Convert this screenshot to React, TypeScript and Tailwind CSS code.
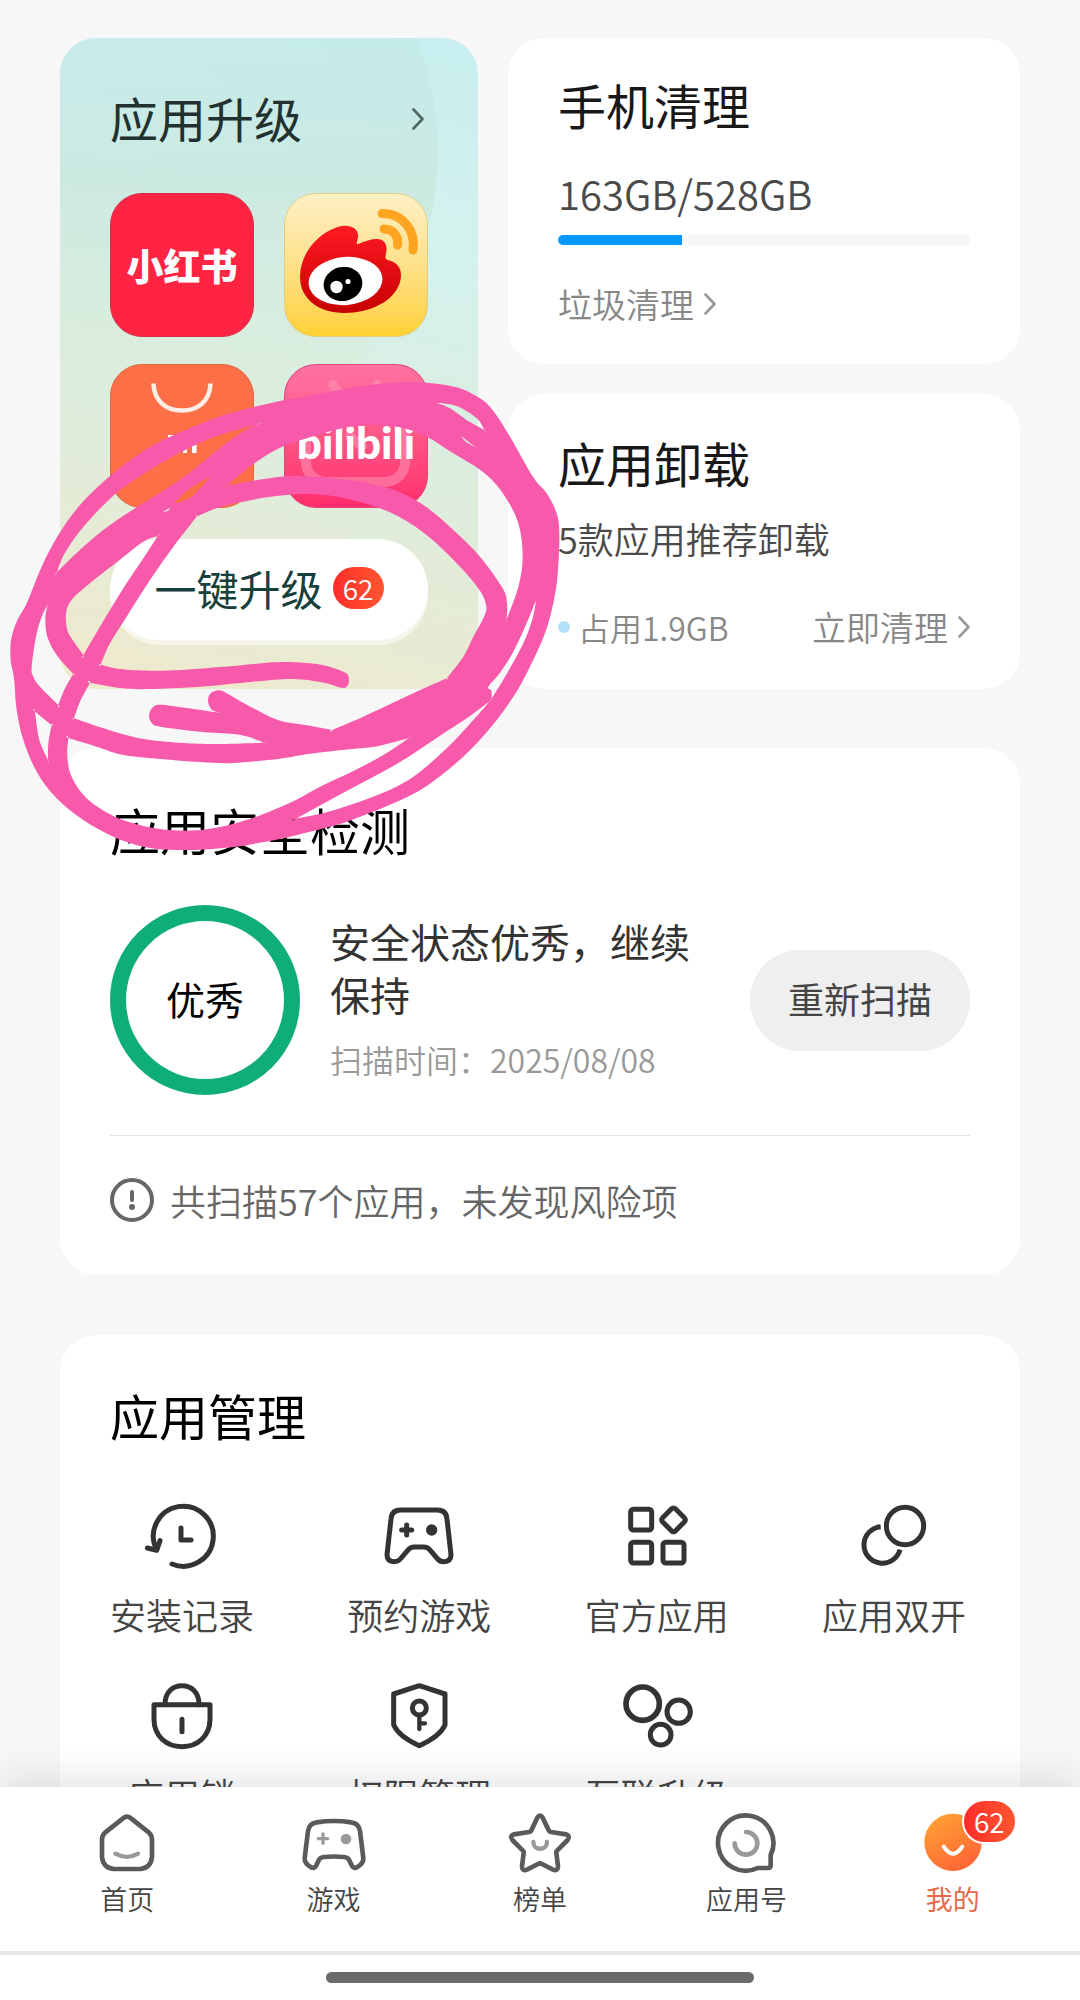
import React from "react";
import type { ReactNode } from "react";

type IconProps = {
  children: ReactNode;
};

// Points are in thirds of a pixel, a repeated point makes a sharp corner
type Point = [number, number];

const smooth = (points: Point[]) => {
  const n = points.length;
  let d = `M${points[0][0]} ${points[0][1]}`;
  for (let i = 0; i < n; i++) {
    const a = points[(i - 1 + n) % n];
    const b = points[i];
    const c = points[(i + 1) % n];
    const e = points[(i + 2) % n];
    d += `C${b[0] + (c[0] - a[0]) / 6} ${b[1] + (c[1] - a[1]) / 6} ${c[0] - (e[0] - b[0]) / 6} ${c[1] - (e[1] - b[1]) / 6} ${c[0]} ${c[1]}`;
  }
  return `${d}Z`;
};

const markerShapes: Point[][] = [
  // outer edge
  [
    [80, 700], [125, 590], [175, 495], [240, 405], [330, 318], [420, 250], [500, 205], [600, 162], [700, 127],
    [840, 93], [930, 77], [1000, 64], [1070, 50], [1180, 38], [1280, 38], [1370, 52], [1440, 85], [1480, 123],
    [1530, 200], [1600, 322], [1640, 370], [1670, 430], [1678, 490], [1674, 600], [1662, 690], [1635, 790],
    [1585, 900], [1540, 980], [1470, 1075], [1390, 1160], [1280, 1248], [1180, 1300], [1040, 1355], [930, 1385],
    [840, 1407], [770, 1420], [700, 1431], [600, 1439], [510, 1439], [430, 1430], [340, 1400], [250, 1350],
    [170, 1285], [110, 1205], [70, 1110], [50, 1020], [42, 925], [32, 870], [33, 810], [50, 755],
  ],
  // inside the small oval, around the arrow and the loose tail
  [
    [590, 440], [590, 440], [650, 415], [720, 397], [800, 382], [870, 374], [940, 372], [1020, 382], [1120, 408],
    [1200, 442], [1290, 503], [1380, 590], [1440, 662], [1459, 710], [1450, 745], [1420, 800], [1390, 860],
    [1340, 925], [1340, 925], [1240, 970], [1090, 1040], [995, 1080], [995, 1080], [920, 1066], [840, 1052],
    [780, 1025], [720, 993], [675, 967], [655, 961], [632, 970], [624, 992], [634, 1018], [655, 1028],
    [655, 1028], [560, 1014], [480, 1004], [456, 1015], [447, 1037], [456, 1060], [480, 1070], [600, 1085],
    [700, 1092], [750, 1102], [792, 1118], [792, 1118], [650, 1122], [550, 1119], [450, 1110], [380, 1096],
    [280, 1065], [222, 1045], [222, 1045], [240, 995], [270, 938], [270, 938], [370, 955], [450, 957],
    [600, 950], [760, 935], [880, 927], [970, 938], [1025, 953], [1041, 949], [1047, 930], [1036, 908],
    [970, 886], [890, 877], [820, 877], [700, 888], [540, 900], [450, 902], [360, 897], [302, 884],
    [302, 884], [330, 820], [380, 740], [450, 630], [520, 530],
  ],
  [
    [473, 499], [473, 499], [430, 515], [350, 577], [270, 640], [215, 690], [198, 730], [202, 780], [218, 810],
    [250, 855], [250, 855], [300, 770], [370, 655], [430, 565],
  ],
  [
    [171, 606], [171, 606], [195, 548], [255, 465], [345, 373], [430, 312], [500, 270], [560, 238], [650, 198],
    [762, 166], [780, 158], [780, 158], [720, 190], [640, 250], [560, 315], [480, 368], [410, 412], [330, 465],
    [250, 530],
  ],
  [[520, 402], [520, 402], [570, 355], [632, 318], [632, 318], [605, 350], [570, 384]],
  [[488, 426], [488, 426], [510, 413], [510, 413], [505, 422]],
  [
    [680, 347], [680, 347], [760, 282], [840, 233], [930, 202], [1040, 172], [1120, 164], [1200, 172],
    [1280, 200], [1360, 250], [1450, 307], [1510, 372], [1555, 460], [1568, 560], [1555, 650], [1520, 748],
    [1520, 748], [1521, 700], [1508, 655], [1440, 560], [1360, 480], [1280, 412], [1200, 367], [1110, 340],
    [990, 323], [890, 318], [840, 320], [760, 332],
  ],
  [[1310, 98], [1310, 98], [1370, 108], [1430, 145], [1453, 180], [1453, 180], [1400, 150], [1350, 115]],
  [[1382, 197], [1382, 197], [1428, 232], [1428, 232], [1400, 217]],
  [
    [1608, 690], [1608, 690], [1580, 760], [1540, 845], [1500, 908], [1465, 950], [1474, 962], [1475, 986],
    [1475, 986], [1520, 912], [1570, 820], [1598, 745],
  ],
  [
    [1470, 992], [1470, 992], [1410, 1038], [1320, 1097], [1190, 1182], [1040, 1263], [888, 1346], [888, 1346],
    [990, 1324], [1140, 1272], [1240, 1220], [1340, 1135], [1420, 1050],
  ],
  [
    [1227, 1104], [1227, 1104], [1160, 1122], [1110, 1132], [1000, 1143], [920, 1153], [840, 1166], [700, 1179],
    [600, 1176], [480, 1167], [370, 1155], [290, 1130], [205, 1104], [205, 1104], [202, 1160], [215, 1220],
    [260, 1285], [340, 1338], [430, 1368], [520, 1381], [620, 1378], [740, 1350], [870, 1298], [960, 1250],
    [1060, 1203], [1150, 1155],
  ],
  [
    [143, 705], [143, 705], [125, 740], [108, 800], [95, 890], [100, 920], [120, 950], [175, 1005], [175, 1005],
    [195, 955], [220, 912], [220, 912], [170, 855], [142, 800], [136, 745],
  ],
  [[105, 1025], [105, 1025], [155, 1065], [155, 1065], [145, 1120], [144, 1170], [144, 1170], [118, 1110]],
];

const MarkerCircle = () => (
  <svg
    aria-hidden="true"
    viewBox="0 0 1710 1470"
    className="pointer-events-none absolute left-0 top-[370px] h-[490px] w-[570px]"
  >
    <path d={markerShapes.map(smooth).join("")} fill="#f85aab" fillRule="evenodd" />
  </svg>
);

const Chevron = ({ className }: { className: string }) => (
  <svg viewBox="0 0 12 22" fill="none" stroke="currentColor" strokeWidth="2.6" className={className}>
    <path d="M1.5 1.5 10.5 11 1.5 20.5" strokeLinecap="round" strokeLinejoin="round" />
  </svg>
);

const XiaohongshuIcon = () => (
  <div className="flex aspect-square items-center justify-center rounded-[32px] border border-[#d4304a] bg-[#ff2442]">
    <span className="text-[37px] leading-none font-black text-white">小红书</span>
  </div>
);

const WeiboIcon = () => (
  <div className="aspect-square overflow-hidden rounded-[32px] border border-[#e0cd84] bg-linear-to-b from-[#fdf0c4] to-[#ffd02f]">
    <svg viewBox="1 1 142 142" className="size-full">
      <defs>
        <linearGradient id="weibo-red" x1="0" y1="0" x2="0" y2="1">
          <stop offset="0" stopColor="#ff1a24" />
          <stop offset="1" stopColor="#c60000" />
        </linearGradient>
      </defs>
      <path
        d="M16 84C16 62 32 42 51 35C63 30 75 34 74 44C73 49 72 52 74 51C81 48 87 46 93 46C101 46 104 53 102 60C101 65 101 66 104 67C112 69 117 74 117 82C117 103 92 120 60 120C35 120 16 106 16 84Z"
        fill="url(#weibo-red)"
      />
      <ellipse cx="61.5" cy="88" rx="37" ry="24" fill="#fff" transform="rotate(-5 61.5 88)" />
      <ellipse cx="59" cy="91" rx="19.5" ry="17" fill="#000" transform="rotate(-12 59 91)" />
      <circle cx="52.5" cy="94" r="6.2" fill="#fff" />
      <circle cx="64" cy="88.5" r="2.6" fill="#fff" />
      <g fill="none" stroke="#fda421" strokeWidth="9" strokeLinecap="round">
        <path d="M98 20.500C118 20 132 37 129 57" />
        <path d="M100 36C109 36 115 43 113.500 52" />
      </g>
    </svg>
  </div>
);

const MiStoreIcon = () => (
  <div className="aspect-square overflow-hidden rounded-[32px] border border-[#dc683f] bg-[#fd6f46]">
    <svg viewBox="1 1 142 142" className="size-full">
      <path
        d="M43.500 19.500C44 37 56 46.500 72 46.500S100 37 100.500 19.500"
        fill="none"
        stroke="#ffeee6"
        strokeWidth="4.500"
      />
      <path d="M58 71H70Q77 71 77 78V89H73V79Q73 75 69 75H62V89H58ZM65.500 79H69.500V89H65.500ZM82 71H86.500V89H82Z" fill="#fff" />
    </svg>
  </div>
);

const BilibiliIcon = () => (
  <div className="relative flex aspect-square items-center justify-center overflow-hidden rounded-[32px] border border-[#e0457c] bg-linear-to-b from-[#ff72a2] to-[#ff2b6c]">
    <svg viewBox="1 1 142 142" className="absolute inset-0 size-full">
      <g fill="none" stroke="#ff8db0" strokeOpacity="0.6" strokeWidth="10" strokeLinecap="round">
        <rect x="22" y="36" width="99" height="82" rx="20" />
        <path d="M49 21 59 34M93 21 83 34M66 72 78 82" />
      </g>
    </svg>
    <span className="relative pt-3 font-['Lato','Liberation_Sans',sans-serif] text-[44px] leading-none font-black text-white">
      bilibili
    </span>
  </div>
);

const CountBadge = ({ count, className }: { count: number; className: string }) => (
  <span
    className={`flex items-center justify-center rounded-full bg-linear-to-r from-[#ff2a2a] to-[#ff5530] text-[28px] leading-none font-[350] text-white ${className}`}
  >
    {count}
  </span>
);

const UpgradeCard = () => (
  <section className="relative overflow-hidden rounded-[36px] bg-linear-[195deg,#c8eeef_0%,#d3f2ee_28%,#dcedde_58%,#f0e9cc_100%] px-[50px] pt-[55px] pb-12">
    <svg aria-hidden="true" viewBox="0 0 418 650" className="absolute inset-0 size-full">
      <defs>
        <linearGradient id="upgrade-glow" x1="0" y1="0" x2="0" y2="1">
          <stop offset="0.300" stopColor="#c2e9ea" stopOpacity="0.600" />
          <stop offset="0.550" stopColor="#c9e6dc" stopOpacity="0.700" />
          <stop offset="0.850" stopColor="#dcecd8" stopOpacity="0.400" />
          <stop offset="1" stopColor="#dcecd8" stopOpacity="0" />
        </linearGradient>
      </defs>
      <circle cx="64" cy="112" r="314" fill="url(#upgrade-glow)" />
    </svg>
    <a href="#upgrade" className="relative flex items-center justify-between text-[#22302f]">
      <h2 className="text-5xl leading-[48px]">应用升级</h2>
      <Chevron className="mt-1 mr-1 h-[22px] w-3 text-[#4f6665]" />
    </a>
    <div className="relative mt-[52px] grid grid-cols-2 gap-x-[30px] gap-y-[27px]">
      <XiaohongshuIcon />
      <WeiboIcon />
      <MiStoreIcon />
      <BilibiliIcon />
    </div>
    <button
      type="button"
      className="relative mt-[31px] flex h-[101px] w-full items-center justify-center gap-2.5 rounded-full bg-white pb-1 text-[42px] leading-none text-[#17403c] shadow-[0_5px_0_rgba(255,255,255,0.55)]"
    >
      一键升级
      <CountBadge count={62} className="h-[42px] w-[51px]" />
    </button>
  </section>
);

const CleanCard = () => (
  <section className="rounded-[36px] bg-white px-[50px] pt-[42px] pb-9">
    <h2 className="text-5xl leading-[48px] text-[#181818]">手机清理</h2>
    <p className="mt-[35px] text-[40px] leading-[60px] font-[350] text-[#4a4a4a]">163GB/528GB</p>
    <div className="mt-3 h-[10px] overflow-hidden rounded-full bg-[#f6f6f6]">
      <div className="h-full w-[30%] bg-[#0397ff]" />
    </div>
    <a href="#clean" className="mt-[35px] flex items-center gap-2.5 text-[34px] leading-[48px] font-[350] text-[#888]">
      垃圾清理
      <Chevron className="h-[22px] w-3 text-[#999]" />
    </a>
  </section>
);

const UninstallCard = () => (
  <section className="rounded-[36px] bg-white px-[50px] pt-[44px] pb-[38px]">
    <h2 className="text-5xl leading-[48px] text-[#181818]">应用卸载</h2>
    <p className="mt-[26px] text-4xl leading-[52px] font-[350] text-[#4a4a4a]">5款应用推荐卸载</p>
    <div className="mt-[39px] flex items-center justify-between leading-[48px] font-[350] text-[#888]">
      <span className="flex items-center gap-2 text-[32px]">
        <i className="size-3 rounded-full bg-[#b3e1f8]" />
        占用1.9GB
      </span>
      <a href="#uninstall" className="flex items-center gap-2.5 text-[34px]">
        立即清理
        <Chevron className="h-[22px] w-3 text-[#999]" />
      </a>
    </div>
  </section>
);

const SecurityCard = () => (
  <section className="mt-[59px] rounded-[36px] bg-white px-[50px] pt-[56px] pb-[50px]">
    <h2 className="text-[50px] leading-[50px] text-black">应用安全检测</h2>
    <div className="mt-[51px] flex items-center">
      <div className="flex size-[190px] shrink-0 items-center justify-center rounded-full border-16 border-[#0fae76] pb-1 text-[39px] leading-none text-black">
        优秀
      </div>
      <div className="ml-[30px] flex-1">
        <p className="text-[40px] leading-[53px] text-[#333]">安全状态优秀，继续保持</p>
        <p className="mt-3 text-[32px] leading-[52px] font-[350] text-[#999]">扫描时间：2025/08/08</p>
      </div>
      <button
        type="button"
        className="ml-10 h-[101px] w-[220px] shrink-0 rounded-full bg-[#efefef] pb-1 text-4xl leading-none text-[#444]"
      >
        重新扫描
      </button>
    </div>
    <p className="mt-10 flex items-center gap-4 border-t border-[#e4e4e4] pt-[39px] text-4xl leading-[50px] font-[350] text-[#666]">
      <svg viewBox="0 0 44 44" fill="none" stroke="#666" strokeWidth="4" className="size-11">
        <circle cx="22" cy="22" r="20" />
        <path d="M22 14V22" strokeLinecap="round" />
        <circle cx="22" cy="29" r="3" fill="#666" stroke="none" />
      </svg>
      共扫描57个应用，未发现风险项
    </p>
  </section>
);

const ToolIcon = ({ children }: IconProps) => (
  <svg
    viewBox="0 0 216 216"
    fill="none"
    stroke="#333"
    strokeWidth="15"
    strokeLinejoin="round"
    className="size-[72px] overflow-visible"
  >
    {children}
  </svg>
);

const tools = [
  {
    label: "安装记录",
    icon: (
      <ToolIcon>
        <path d="M78 192A90 90 0 1 0 31 148M4 144 32 151 42 122M105 84V120H135" strokeLinecap="round" />
      </ToolIcon>
    ),
  },
  {
    label: "预约游戏",
    icon: (
      <ToolIcon>
        <path d="M53 30H163Q190 30 192 57L204 164Q204 184 182 185Q171 185 164 177L142 151Q134 141 122 141H94Q82 141 74 151L52 177Q45 185 34 185Q12 184 12 164L24 57Q26 30 53 30Z" />
        <path d="M56 90H86M71 75V105" strokeLinecap="round" />
        <circle cx="146" cy="90" r="17" fill="#333" stroke="none" />
      </ToolIcon>
    ),
  },
  {
    label: "官方应用",
    icon: (
      <ToolIcon>
        <rect x="29" y="28" width="63" height="62" rx="8" />
        <rect x="29" y="127" width="63" height="62" rx="8" />
        <rect x="126" y="127" width="63" height="62" rx="8" />
        <rect x="130" y="32" width="55" height="55" rx="8" transform="rotate(45 157.500 59.500)" />
      </ToolIcon>
    ),
  },
  {
    label: "应用双开",
    icon: (
      <ToolIcon>
        <circle cx="141" cy="78" r="56" />
        <path d="M68 80A55 55 0 1 0 126 149" />
      </ToolIcon>
    ),
  },
  {
    label: "应用锁",
    icon: (
      <ToolIcon>
        <path d="M24 74H192V118C192 168 155 200 108 200S24 168 24 118Z" />
        <path d="M57 74C57 36 80 17 108 17S159 36 159 74M108 118V155" strokeLinecap="round" />
      </ToolIcon>
    ),
  },
  {
    label: "权限管理",
    icon: (
      <ToolIcon>
        <path d="M109 17 186 42V135Q170 170 109 197Q48 170 32 135V42Z" />
        <circle cx="109" cy="84" r="21" />
        <path d="M109 105V147M109 130H126" strokeLinecap="round" strokeWidth="13" />
      </ToolIcon>
    ),
  },
  {
    label: "互联升级",
    icon: (
      <ToolIcon>
        <circle cx="65" cy="71" r="50" strokeWidth="17" />
        <circle cx="173" cy="95" r="35" />
        <circle cx="119" cy="164" r="31" />
      </ToolIcon>
    ),
  },
];

const ManageCard = () => (
  <section className="mt-[60px] rounded-[36px] bg-white pt-[55px] pb-12 pr-[54px] pl-[50px]">
    <h2 className="text-[49px] leading-[50px] text-black">应用管理</h2>
    <ul className="mt-[60px] grid grid-cols-[repeat(4,144px)] justify-between gap-y-10">
      {tools.map((tool) => (
        <li key={tool.label}>
          <a href={`#${tool.label}`} className="flex flex-col items-center text-4xl leading-[52px] font-[350] text-[#444]">
            {tool.icon}
            <span className="mt-4">{tool.label}</span>
          </a>
        </li>
      ))}
    </ul>
  </section>
);

const NavIcon = ({ children }: IconProps) => (
  <svg
    viewBox="0 0 192 192"
    fill="none"
    stroke="#595b5a"
    strokeWidth="14"
    strokeLinejoin="round"
    strokeLinecap="round"
    className="size-16"
  >
    {children}
  </svg>
);

const tabs = [
  {
    label: "首页",
    icon: (
      <NavIcon>
        <path d="M84 22Q96 12 108 22L162 65Q171 73 171 86V138Q168 170 136 174H56Q24 170 21 138V86Q21 73 30 65Z" />
        <path d="M61 128Q96 147 129 128" stroke="#999" strokeWidth="13" />
      </NavIcon>
    ),
  },
  {
    label: "游戏",
    icon: (
      <NavIcon>
        <path d="M44 34Q96 26 148 34Q171 37 174 60L184 142Q185 158 163 170Q155 173 149 163L141 146Q137 139 126 138Q96 135 66 138Q55 139 51 146L43 163Q37 173 29 170Q7 158 8 142L18 60Q21 37 44 34Z" />
        <path d="M49 83H77M63 69V97" stroke="#999" strokeWidth="10" />
        <circle cx="132" cy="84" r="16" fill="#999" stroke="none" />
      </NavIcon>
    ),
  },
  {
    label: "榜单",
    icon: (
      <NavIcon>
        <path d="M88 20Q96 8 104 20L122 58Q124 62 129 63L174 70Q188 74 179 87L148 118Q144 121 145 126L150 166Q149 182 135 176L96 156 57 176Q43 182 42 166L47 126Q48 121 44 118L13 87Q4 74 18 70L63 63Q68 62 70 58Z" />
        <path d="M76 93C76 120 117 120 117 93" stroke="#999" strokeWidth="13" />
      </NavIcon>
    ),
  },
  {
    label: "应用号",
    icon: (
      <NavIcon>
        <path d="M170 132A83 83 0 1 0 131 171H162Q170 171 170 163Z" />
        <path d="M96 63A34 34 0 1 1 62 97" stroke="#999" />
      </NavIcon>
    ),
  },
  {
    label: "我的",
    active: true,
    badge: 62,
    icon: (
      <NavIcon>
        <defs>
          <linearGradient id="mine-face" x1="0.200" y1="0" x2="0.800" y2="1">
            <stop offset="0" stopColor="#ffa234" />
            <stop offset="1" stopColor="#ff6034" />
          </linearGradient>
        </defs>
        <circle cx="96" cy="94" r="86" fill="url(#mine-face)" stroke="none" />
        <path d="M68 107Q96 149 124 107" stroke="#fff" strokeWidth="12" />
      </NavIcon>
    ),
  },
];

const BottomNav = () => (
  <div className="relative bg-white shadow-[0_-4px_40px_rgba(30,30,50,0.14)]">
    <nav className="flex h-[164px] px-6 pt-6">
      {tabs.map((tab) => (
        <a
          key={tab.label}
          href={`#${tab.label}`}
          aria-current={tab.active ? "page" : undefined}
          className={`flex flex-1 flex-col items-center text-[27px] leading-9 ${tab.active ? "text-[#e8694a]" : "font-[350] text-[#444]"}`}
        >
          <span className="relative">
            {tab.icon}
            {tab.badge && (
              <CountBadge
                count={tab.badge}
                className="absolute -top-3 left-[41px] h-[45px] w-[55px] border-2 border-white pb-0.5"
              />
            )}
          </span>
          <span className="mt-1.5">{tab.label}</span>
        </a>
      ))}
    </nav>
    <div className="flex h-[49px] justify-center border-t-4 border-[#e8e8e8] pt-[17px]">
      <div className="h-[11px] w-[428px] rounded-full bg-[#6a6a6a]" />
    </div>
  </div>
);

const App = () => {
  return (
    <div className="flex h-screen flex-col overflow-hidden bg-[#f7f7f7] font-['Noto_Sans_CJK_SC',sans-serif]">
      <main className="relative min-h-0 flex-1 overflow-y-auto px-[60px] pt-[38px] [scrollbar-width:none]">
        <div className="grid grid-cols-[418fr_512fr] gap-[30px]">
          <UpgradeCard />
          <div className="flex flex-col gap-[30px]">
            <CleanCard />
            <UninstallCard />
          </div>
        </div>
        <SecurityCard />
        <ManageCard />
        <MarkerCircle />
      </main>
      <BottomNav />
    </div>
  );
};

export default App;
